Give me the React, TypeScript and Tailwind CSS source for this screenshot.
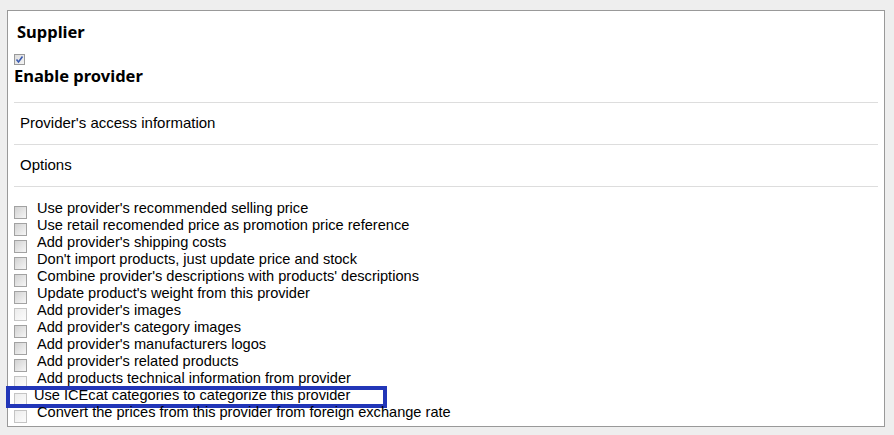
import React from 'react';

interface Opcion {
  label: string;
  light?: boolean;
  marked?: boolean;
}

const opciones: Opcion[] = [
  { label: "Use provider's recommended selling price" },
  { label: 'Use retail recomended price as promotion price reference' },
  { label: "Add provider's shipping costs" },
  { label: "Don't import products, just update price and stock" },
  { label: "Combine provider's descriptions with products' descriptions" },
  { label: "Update product's weight from this provider" },
  { label: "Add provider's images", light: true },
  { label: "Add provider's category images" },
  { label: "Add provider's manufacturers logos" },
  { label: "Add provider's related products" },
  { label: 'Add products technical information from provider', light: true },
  { label: 'Use ICEcat categories to categorize this provider', light: true, marked: true },
  { label: 'Convert the prices from this provider from foreign exchange rate', light: true },
];

function Casilla({ light }: { light?: boolean }) {
  return (
    <span
      className={
        light
          ? 'mt-[6px] block h-[13px] w-[13px] shrink-0 border border-[#c4c4c4] bg-gradient-to-br from-[#ececec] to-[#fcfcfc]'
          : 'mt-[6px] block h-[13px] w-[13px] shrink-0 border border-[#a2a2a2] bg-gradient-to-br from-[#d2d2d2] to-[#f6f6f6]'
      }
    />
  );
}

export default function App() {
  return (
    <div className="min-h-[435px] bg-[#eeeeee] pt-[10px] pl-[7px]">
      <div className="h-[417px] w-[878px] border border-[#999999] bg-white px-[6px]">
        <div
          className="mt-[11px] pl-[3px] text-[16.5px] font-bold leading-[20px] text-black"
          style={{ fontFamily: '"Noto Sans", sans-serif' }}
        >
          Supplier
        </div>

        <div className="mt-[12px] flex h-[11px] w-[11px] items-center justify-center border border-[#9a9a9a] bg-gradient-to-br from-[#dcdcdc] to-[#f4f4f4]">
          <svg width="9" height="9" viewBox="0 0 9 9">
            <path d="M1.5 4.5 L3.5 7 L7.5 1.5" fill="none" stroke="#3b5bb0" strokeWidth="1.6" />
          </svg>
        </div>
        <div
          className="mt-[1px] text-[16.5px] font-bold leading-[20px] text-black"
          style={{ fontFamily: '"Noto Sans", sans-serif' }}
        >
          Enable provider
        </div>

        <div style={{ fontFamily: '"Liberation Sans", Arial, sans-serif' }}>
          <div className="mt-[16px] border-t border-[#dddddd]" />
          <div className="flex h-[42px] items-center border-b border-[#dddddd] px-[6px] text-[15px] text-black">
            Provider's access information
          </div>
          <div className="flex h-[42px] items-center border-b border-[#dddddd] px-[6px] text-[15px] text-black">
            Options
          </div>

          {/* opciones del proveedor */}
          <div className="mt-[13px]">
            {opciones.map((op) => (
              <div
                key={op.label}
                className={
                  op.marked
                    ? 'relative flex h-[17px] gap-[7px] text-[14.6px] leading-[17px] text-black'
                    : 'relative flex h-[17px] gap-[10px] text-[14.6px] leading-[17px] text-black'
                }
              >
                <Casilla light={op.light} />
                <span className="whitespace-nowrap">{op.label}</span>
                {op.marked && (
                  <span className="pointer-events-none absolute top-[-1px] left-[-8px] h-[22px] w-[381px] border-4 border-solid border-[#2236b8]" />
                )}
              </div>
            ))}
          </div>
        </div>
      </div>
    </div>
  );
}
